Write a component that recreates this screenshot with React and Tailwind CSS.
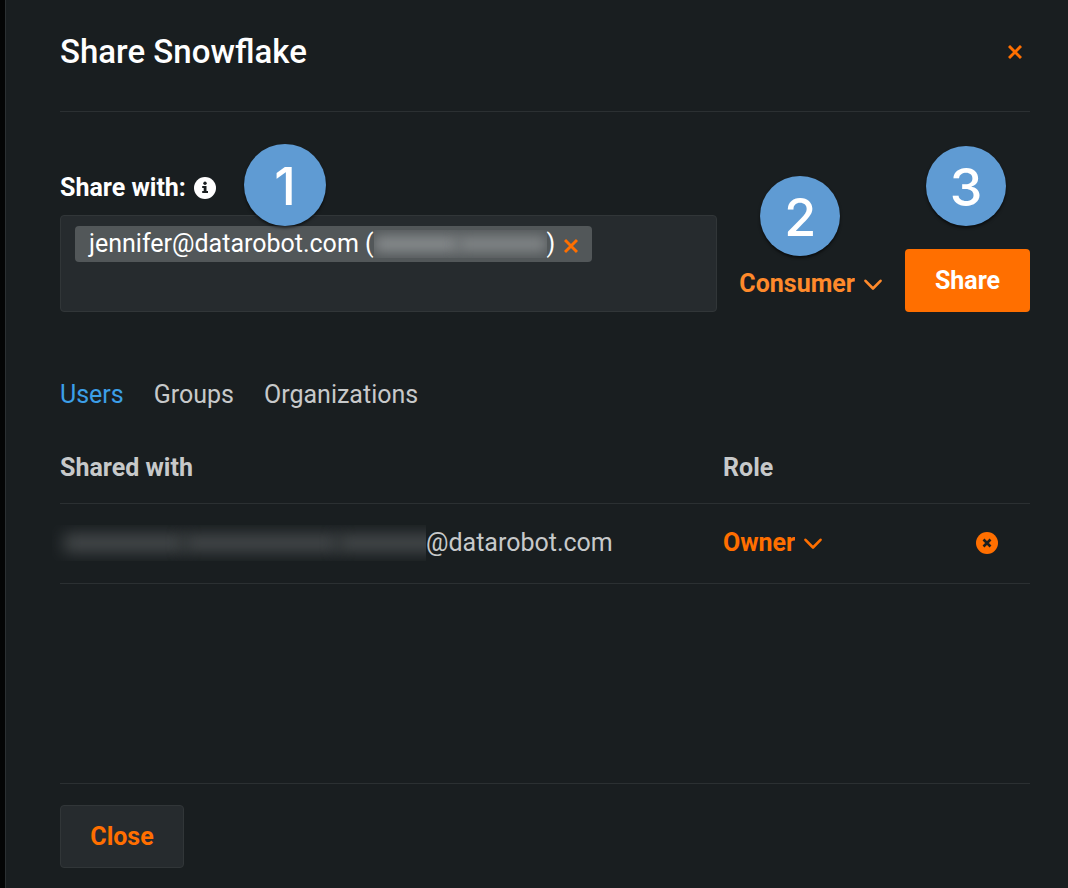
import React, { useState } from "react";

const TABS = ["Users", "Groups", "Organizations"];
const ROLES = ["Owner", "Editor", "Consumer"];

function CrossIcon({ className = "" }) {
  return (
    <svg viewBox="0 0 14 14" className={className} fill="none" stroke="currentColor" strokeWidth="2.9" aria-hidden="true">
      <path d="M1 1 13 13M13 1 1 13" />
    </svg>
  );
}

function InfoIcon() {
  return (
    <svg viewBox="0 0 22 22" className="h-[22px] w-[22px]" aria-hidden="true">
      <circle cx="11" cy="11" r="11" fill="#fff" />
      <circle cx="11" cy="6.2" r="1.7" fill="#191e20" />
      <path d="M8.2 9h4.3v5h1.5v2H8.2v-2h1.5v-3H8.2z" fill="#191e20" />
    </svg>
  );
}

function RemoveIcon() {
  return (
    <svg viewBox="0 0 22 22" className="h-[22px] w-[22px]" aria-hidden="true">
      <circle cx="11" cy="11" r="11" fill="#ff6f00" />
      <path d="M7.5 7.5l7 7M14.5 7.5l-7 7" stroke="#191e20" strokeWidth="2.6" />
    </svg>
  );
}

function RoleSelect({ label, value, onChange, className = "text-[#ff6f00]" }) {
  return (
    <span className={`inline-flex items-center gap-[9px] ${className}`}>
      <select
        aria-label={label}
        value={value}
        onChange={(e) => onChange(e.target.value)}
        className="field-sizing-content cursor-pointer appearance-none bg-transparent font-bold outline-none"
      >
        {ROLES.map((role) => (
          <option key={role} value={role}>
            {role}
          </option>
        ))}
      </select>
      <svg viewBox="0 0 18 12" className="mt-[2px] h-3 w-[18px]" fill="none" stroke="currentColor" strokeWidth="2.6" aria-hidden="true">
        <path d="M1.5 1.8 9 9.5 16.5 1.8" strokeLinecap="round" strokeLinejoin="round" />
      </svg>
    </span>
  );
}

function StepBadge({ number, className }) {
  return (
    <span
      className={`absolute z-10 grid place-items-center rounded-full bg-[#5f9bd3] pt-1 font-[Inter,sans-serif] text-[52px] leading-none font-medium text-white shadow-[0_2px_3px_rgba(0,0,0,0.6)] ${className}`}
    >
      {number}
    </span>
  );
}

export default function App() {
  const [tab, setTab] = useState("Users");
  const [newRole, setNewRole] = useState("Consumer");
  const [ownerRole, setOwnerRole] = useState("Owner");

  return (
    <div className="flex min-h-screen bg-[#040505] pl-[5px] font-[Roboto,sans-serif] text-[25px] leading-8 text-[#c7c9ca]">
      <main className="flex flex-1 flex-col border-l border-[#2b3032] bg-[#191e20] pr-[38px] pl-[54px]">
        <header className="flex items-center justify-between border-b border-[#2b3032] pt-8 pb-[39px]">
          <h1 className="text-[33px] leading-10 font-medium text-white">Share Snowflake</h1>
          <button type="button" aria-label="Close dialog" className="mr-2 text-[#ff6f00]">
            <CrossIcon className="h-[14px] w-[14px]" />
          </button>
        </header>

        <section className="flex items-end pt-[60px]">
          <div className="relative flex-1">
            <div className="flex items-center gap-2 pb-[11px]">
              <label htmlFor="share-with" className="font-bold text-white">
                Share with:
              </label>
              <InfoIcon />
            </div>
            <StepBadge number={1} className="-top-7 left-[184px] h-[82px] w-[82px]" />
            <div className="flex h-[97px] flex-wrap items-start rounded-sm border border-[#313638] bg-[#262b2e] px-[14px] pt-[10px]">
              <span className="flex h-9 items-center rounded-sm bg-[#525759] px-[14px] text-white">
                <span>jennifer@datarobot.com (</span>
                <span className="flex h-7 w-[173px] items-center overflow-hidden">
                  <span className="h-4 w-[84px] bg-[#8b8f91] blur-[7px]" />
                  <span className="h-4 flex-1 bg-[#85898b] blur-[7px]" />
                </span>
                <span>)</span>
                <button type="button" aria-label="Remove jennifer@datarobot.com" className="mt-1 ml-[9px] text-[#ff6f00]">
                  <CrossIcon className="h-[14px] w-[14px]" />
                </button>
              </span>
              <input id="share-with" type="text" className="h-9 w-full min-w-0 bg-transparent text-white outline-none" />
            </div>
          </div>

          <div className="relative mr-[23px] ml-[22px] pb-3">
            <StepBadge number={2} className="-top-[92px] left-[21px] h-20 w-20" />
            <RoleSelect label="New user role" value={newRole} onChange={setNewRole} className="text-[#ff8a2b]" />
          </div>

          <div className="relative">
            <StepBadge number={3} className="-top-[103px] left-[21px] h-20 w-20" />
            <button type="button" className="h-[63px] w-[125px] rounded-sm bg-[#ff6f00] font-bold text-white">
              Share
            </button>
          </div>
        </section>

        <nav className="flex gap-[30px] pt-[67px]">
          {TABS.map((name) => (
            <button
              key={name}
              type="button"
              onClick={() => setTab(name)}
              className={name === tab ? "text-[#3c9fe8]" : "text-[#c7c9ca]"}
            >
              {name}
            </button>
          ))}
        </nav>

        <table className="mt-[22px] w-full table-fixed text-left">
          <thead>
            <tr className="h-[70px] border-b border-[#2b3032]">
              <th className="font-bold">Shared with</th>
              <th className="w-[240px] font-bold">Role</th>
              <th className="w-[67px]" aria-label="Actions" />
            </tr>
          </thead>
          <tbody>
            <tr className="h-20 border-b border-[#2b3032]">
              <td>
                <div className="flex items-center">
                  <span className="-ml-2 flex h-9 w-[374px] items-center overflow-hidden pl-3">
                    <span className="h-[18px] w-[120px] bg-[#474b4d] blur-[8px]" />
                    <span className="h-[18px] w-[154px] bg-[#464a4c] blur-[8px]" />
                    <span className="-mr-4 h-[18px] flex-1 bg-[#474b4d] blur-[8px]" />
                  </span>
                  <span>@datarobot.com</span>
                </div>
              </td>
              <td>
                <RoleSelect label="User role" value={ownerRole} onChange={setOwnerRole} />
              </td>
              <td>
                <button type="button" aria-label="Remove user" className="ml-[13px] block">
                  <RemoveIcon />
                </button>
              </td>
            </tr>
          </tbody>
        </table>

        <footer className="mt-auto border-t border-[#2b3032] pt-[21px] pb-5">
          <button
            type="button"
            className="h-[63px] w-[124px] rounded-sm border border-[#313638] bg-[#262b2e] font-bold text-[#ff6f00]"
          >
            Close
          </button>
        </footer>
      </main>
    </div>
  );
}
